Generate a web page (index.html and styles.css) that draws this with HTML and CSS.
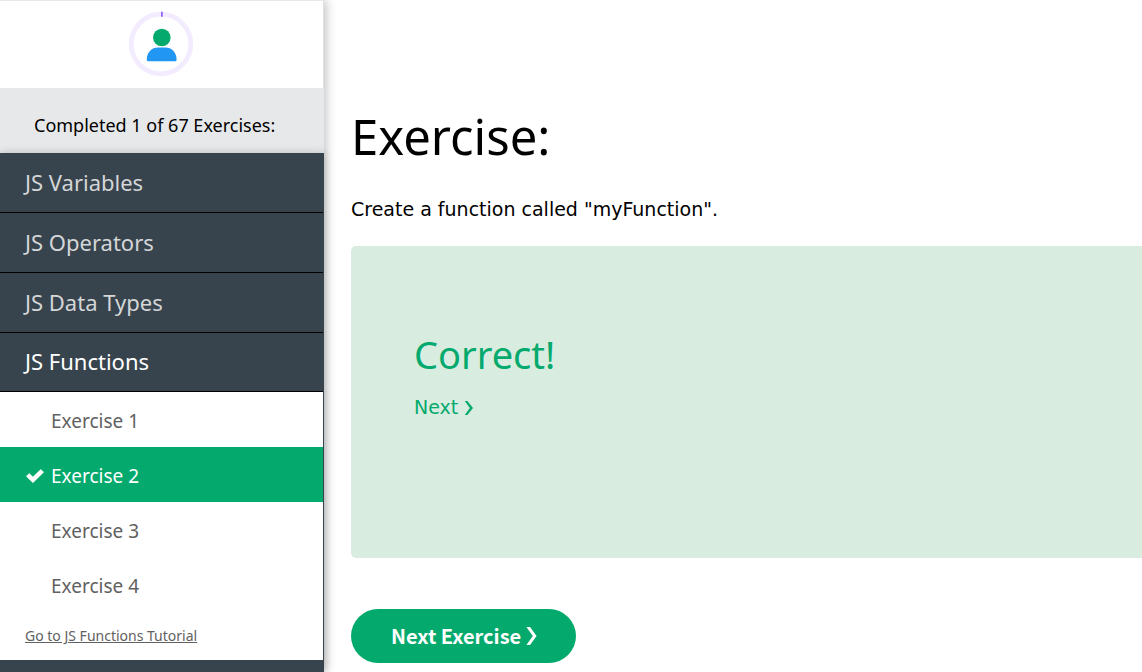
FILE: index.html
```html
<!DOCTYPE html>
<html lang="en">
<head>
<meta charset="utf-8">
<title>JavaScript Exercises</title>
<link rel="stylesheet" href="styles.css">
</head>
<body>
<div class="layout">
  <aside class="sidebar">
    <div class="profile">
      <svg class="avatar" viewBox="0 0 66 66" role="img" aria-label="Profile progress">
        <circle cx="33" cy="33" r="29.8" fill="none" stroke="#f3ecff" stroke-width="4.8"/>
        <path d="M33 .8h1.800v5H33z" fill="#9763f6"/>
        <circle cx="33.800" cy="26.500" r="8.800" fill="#04aa6d"/>
        <path d="M18.800 48.400C18.800 41 24 36.400 30 36.400h7.400c6 0 11.200 4.600 11.200 12 0 1.200-.6 1.900-1.800 1.900H20.600c-1.200 0-1.800-.7-1.800-1.900z" fill="#2196f3"/>
      </svg>
    </div>
    <p class="completed">Completed 1 of 67 Exercises:</p>
    <nav class="menu">
      <button class="topic" type="button">JS Variables</button>
      <button class="topic" type="button">JS Operators</button>
      <button class="topic" type="button">JS Data Types</button>
      <button class="topic topic-open" type="button">JS Functions</button>
      <div class="exercises">
        <a class="exercise" href="#">Exercise 1</a>
        <a class="exercise exercise-active" href="#">
          <svg class="check" viewBox="0 0 18 14" aria-hidden="true"><path d="M0.400 7.300 3.200 4.500 6.900 8 14.800.4 17.600 3.200 6.900 13.700z" fill="#fff" stroke="#fff" stroke-width=".6" stroke-linejoin="round"/></svg>Exercise 2</a>
        <a class="exercise" href="#">Exercise 3</a>
        <a class="exercise" href="#">Exercise 4</a>
        <a class="tutorial" href="#">Go to JS Functions Tutorial</a>
      </div>
    </nav>
  </aside>
  <main class="content">
    <h1 class="title">Exercise:</h1>
    <p class="task">Create a function called "myFunction".</p>
    <section class="result">
      <h2 class="verdict">Correct!</h2>
      <a class="next" href="#">Next <svg class="next-arrow" viewBox="0 0 10 14" aria-hidden="true"><path d="M.8 0h2.600L9 7l-5.600 7H.8L5.800 7z" fill="currentColor"/></svg></a>
    </section>
    <button class="next-exercise" type="button">Next Exercise <svg class="button-arrow" viewBox="0 0 11 18" aria-hidden="true"><path d="M.4 0h3.600L10.600 9 4 18H.4L6.800 9z" fill="currentColor"/></svg></button>
  </main>
</div>
</body>
</html>
```
FILE: styles.css
```css
* {
  box-sizing: border-box;
}

body {
  margin: 0;
  color: #000;
  background: #fff;
  font-family: "DejaVu Sans", sans-serif;
}

.layout {
  display: flex;
  height: 100vh;
  overflow: hidden;
}

.sidebar {
  display: flex;
  flex: none;
  flex-direction: column;
  width: 324px;
  font-family: "Noto Sans", sans-serif;
  box-shadow: 2px 0 10px rgba(0, 0, 0, 0.25);
}

.profile {
  display: flex;
  flex: none;
  justify-content: center;
  height: 88px;
  padding: 10px 1px 0 0;
  border-top: 1px solid #e7e8ea;
  border-right: 1px solid #e0e0e0;
}

.avatar {
  width: 66px;
  height: 66px;
}

.completed {
  flex: none;
  margin: 0;
  padding: 24px 34px 15px;
  background: #e7e8ea;
  font-size: 18px;
  line-height: 26px;
}

.menu {
  display: flex;
  flex: 1;
  flex-direction: column;
  background: #38444d;
  box-shadow: 0 0 8px rgba(0, 0, 0, 0.2);
}

.topic {
  flex: none;
  height: 60px;
  margin-right: 1px;
  padding: 0 25px 2px;
  border: 0;
  border-bottom: 1px solid #000;
  color: #d4d6d8;
  background: #38444d;
  font: 22px "Noto Sans", sans-serif;
  text-align: left;
}

.topic-open {
  height: 59px;
  color: #fff;
}

.exercises {
  display: flex;
  flex: none;
  flex-direction: column;
  margin-right: 1px;
  background: #fff;
}

.exercise {
  display: flex;
  align-items: center;
  height: 55px;
  padding: 3px 51px 0;
  color: #616161;
  font-size: 19px;
  text-decoration: none;
}

.exercise-active {
  gap: 7px;
  padding-left: 26px;
  color: #fff;
  background: #04aa6d;
}

.check {
  width: 18px;
  height: 14px;
}

.tutorial {
  padding: 13px 25px;
  color: #616161;
  font-size: 14px;
  line-height: 22px;
}

.content {
  flex: 1;
  min-width: 0;
  padding: 96px 0 0 27px;
}

.title {
  margin: 0;
  font: 400 49px/80px "Noto Sans", sans-serif;
}

.task {
  margin: 18px 0 22px;
  font-size: 19px;
  line-height: 30px;
}

.result {
  min-height: 312px;
  padding: 78px 63px;
  border-radius: 5px 0 0 5px;
  color: #04aa6d;
  background: #d9ece0;
}

.verdict {
  margin: 0 0 10px;
  font: 400 38px/60px "Noto Sans", sans-serif;
}

.next {
  color: #04aa6d;
  font-size: 19px;
  line-height: 26px;
  text-decoration: none;
}

.next-arrow {
  width: 10px;
  height: 14px;
  vertical-align: -1px;
}

.next-exercise {
  height: 54px;
  margin-top: 51px;
  padding: 0 39px 2px 40px;
  border: 0;
  border-radius: 27px;
  color: #fff;
  background: #04aa6d;
  font: 700 20px "Noto Sans CJK SC", sans-serif;
}

.button-arrow {
  width: 11px;
  height: 18px;
  vertical-align: -1px;
}
```
